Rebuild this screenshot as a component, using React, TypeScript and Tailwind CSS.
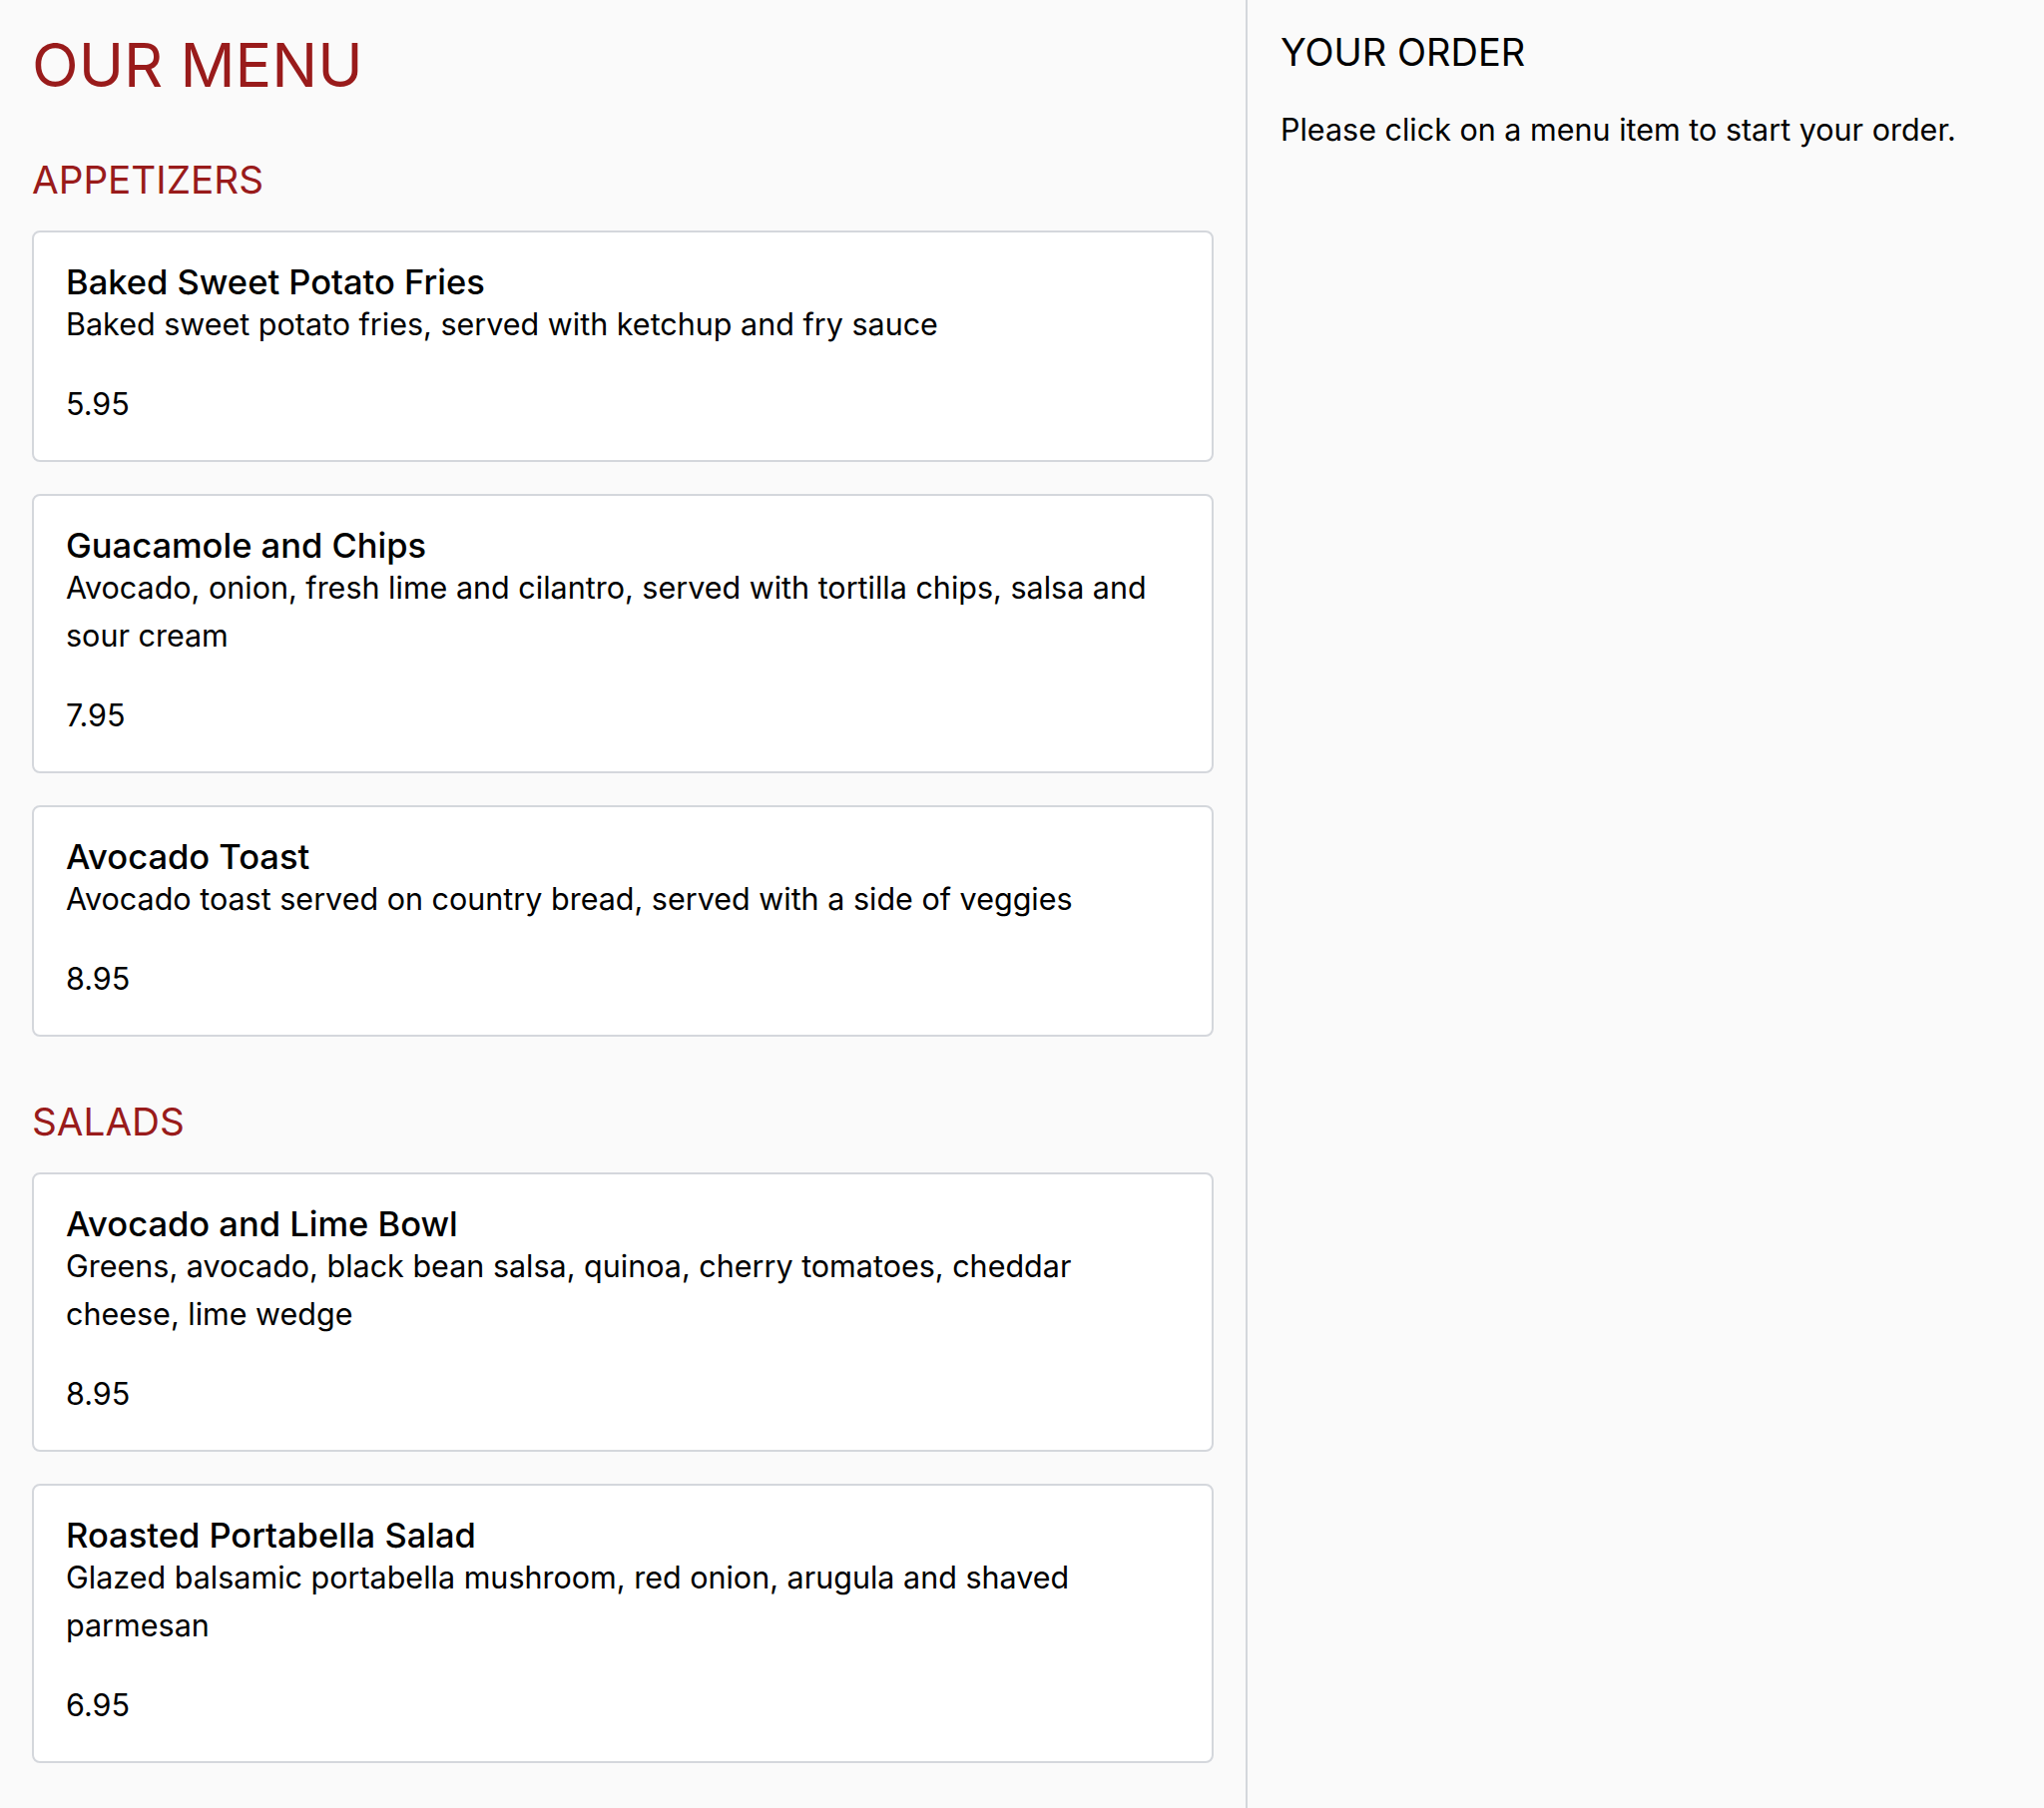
import React from "react";

type Item = { name: string; desc: string; price: string };

const sections: { title: string; items: Item[] }[] = [
  {
    title: "APPETIZERS",
    items: [
      { name: "Baked Sweet Potato Fries", desc: "Baked sweet potato fries, served with ketchup and fry sauce", price: "5.95" },
      { name: "Guacamole and Chips", desc: "Avocado, onion, fresh lime and cilantro, served with tortilla chips, salsa and sour cream", price: "7.95" },
      { name: "Avocado Toast", desc: "Avocado toast served on country bread, served with a side of veggies", price: "8.95" },
    ],
  },
  {
    title: "SALADS",
    items: [
      { name: "Avocado and Lime Bowl", desc: "Greens, avocado, black bean salsa, quinoa, cherry tomatoes, cheddar cheese, lime wedge", price: "8.95" },
      { name: "Roasted Portabella Salad", desc: "Glazed balsamic portabella mushroom, red onion, arugula and shaved parmesan", price: "6.95" },
    ],
  },
];

function Card({ item }: { item: Item }) {
  return (
    <div className="bg-white border-2 border-[#d4d7dc] rounded-[8px] p-8 cursor-pointer">
      <div className="text-[34.5px] leading-[36px] font-medium text-black">{item.name}</div>
      <p className="text-[30.5px] leading-[48px] text-black max-w-[1100px]">{item.desc}</p>
      <p className="mt-8 text-[30.5px] leading-[48px] text-black">{item.price}</p>
    </div>
  );
}

export default function App() {
  return (
    <div className="min-h-screen w-full bg-[#fafafa] flex font-[Inter,sans-serif] antialiased">
      <div className="w-[1248px] shrink-0 px-8 pt-[33px] pb-10">
        <h1 className="text-[61px] leading-[64px] text-[#991b1b] font-normal mb-[59px]">OUR MENU</h1>
        {sections.map((s, i) => (
          <section key={s.title} className={i > 0 ? "mt-[61px]" : ""}>
            <h2 className="text-[38.7px] leading-[48px] text-[#991b1b] font-normal mb-[27px]">{s.title}</h2>
            <div className="flex flex-col gap-8">
              {s.items.map((it) => (
                <Card key={it.name} item={it} />
              ))}
            </div>
          </section>
        ))}
      </div>
      <div className="flex-1 border-l-2 border-[#d4d7dc] pl-[33px] pt-8">
        <h2 className="text-[38px] leading-[40px] text-black font-normal">YOUR ORDER</h2>
        <p className="mt-[38px] text-[30.5px] leading-[40px] text-black">Please click on a menu item to start your order.</p>
      </div>
    </div>
  );
}
